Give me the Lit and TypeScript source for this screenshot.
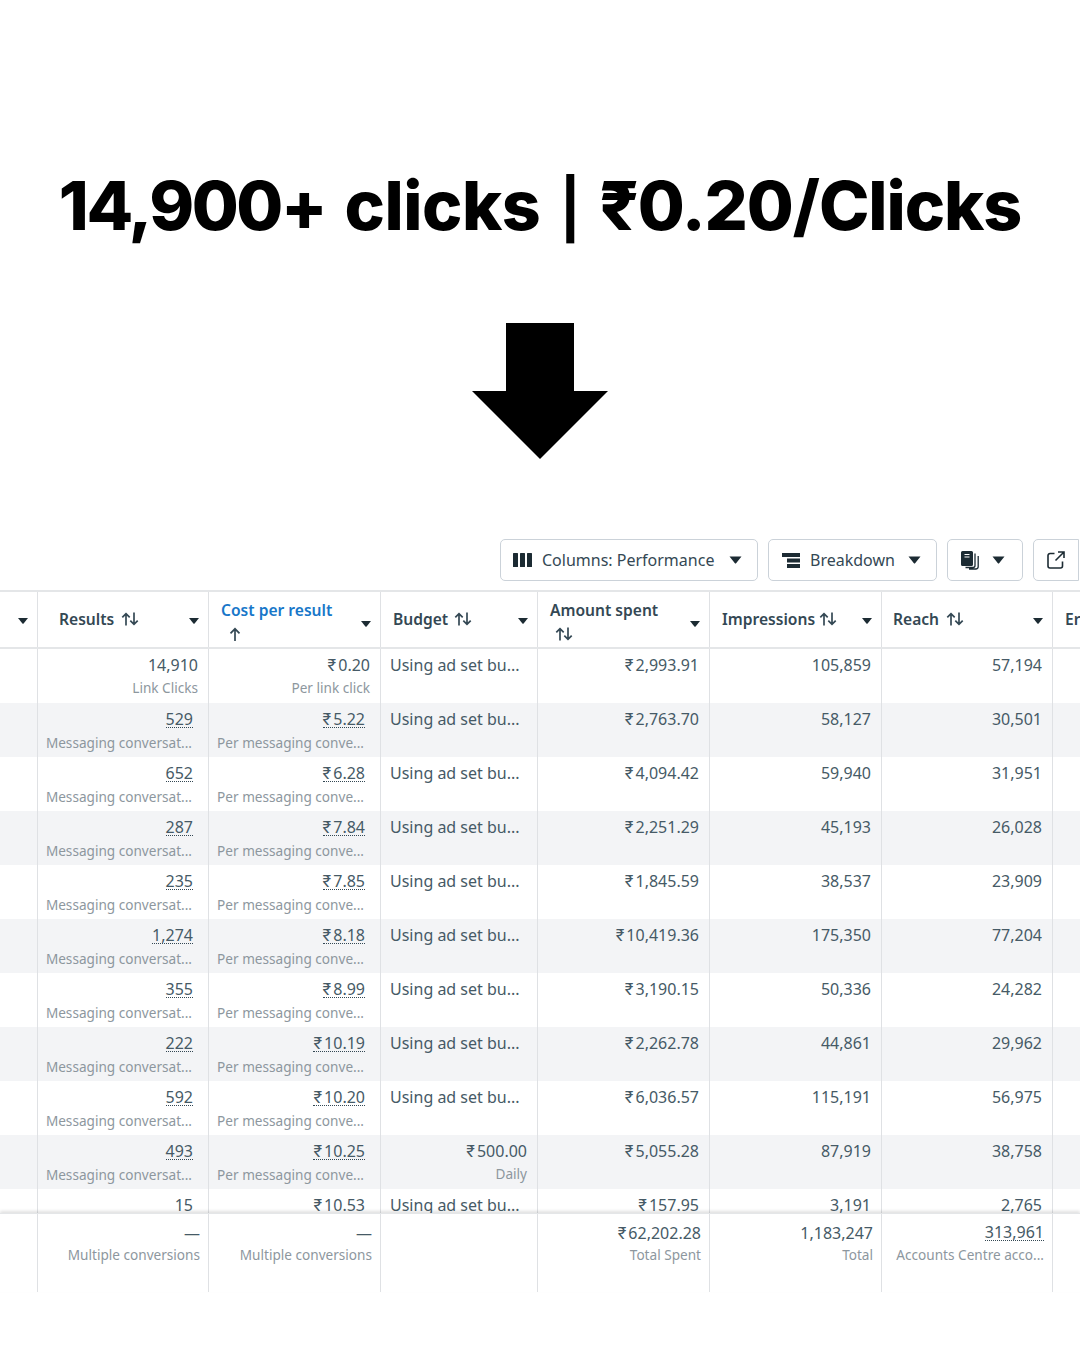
import { LitElement, html, css } from "lit";
import { customElement } from "lit/decorators.js";

type Row = { r: string; c: string; b?: string; a: string; i: string; re: string; first?: boolean };
const rows: Row[] = [
  { r: "14,910", c: "₹0.20", a: "₹2,993.91", i: "105,859", re: "57,194", first: true },
  { r: "529", c: "₹5.22", a: "₹2,763.70", i: "58,127", re: "30,501" },
  { r: "652", c: "₹6.28", a: "₹4,094.42", i: "59,940", re: "31,951" },
  { r: "287", c: "₹7.84", a: "₹2,251.29", i: "45,193", re: "26,028" },
  { r: "235", c: "₹7.85", a: "₹1,845.59", i: "38,537", re: "23,909" },
  { r: "1,274", c: "₹8.18", a: "₹10,419.36", i: "175,350", re: "77,204" },
  { r: "355", c: "₹8.99", a: "₹3,190.15", i: "50,336", re: "24,282" },
  { r: "222", c: "₹10.19", a: "₹2,262.78", i: "44,861", re: "29,962" },
  { r: "592", c: "₹10.20", a: "₹6,036.57", i: "115,191", re: "56,975" },
  { r: "493", c: "₹10.25", b: "₹500.00", a: "₹5,055.28", i: "87,919", re: "38,758" },
];

const money = (s: string) =>
  s.startsWith("₹") ? html`<span class="rs">₹</span>${s.slice(1)}` : s;

const caret = html`<svg class="caret" width="13" height="8" viewBox="0 0 13 8"><path d="M0.500 0.500h12L7.300 7a1 1 0 0 1-1.600 0z" fill="#1c2b33"/></svg>`;
const hcaret = html`<svg class="hcaret" width="10" height="6" viewBox="0 0 10 6"><path d="M0 0h10L5.600 5.500a.8.8 0 0 1-1.200 0z" fill="#1c2b33"/></svg>`;
const sortBoth = html`<svg class="sort" width="18" height="14" viewBox="0 0 18 14" fill="none" stroke="#344854" stroke-width="1.700"><path d="M5 13.500V2M1.300 5.300 5 1.600l3.700 3.700M13 .5V12M9.300 8.700l3.700 3.700 3.700-3.700"/></svg>`;
const sortUp = html`<svg class="sort" width="12" height="14" viewBox="0 0 12 14" fill="none" stroke="#344854" stroke-width="1.700"><path d="M6 14V2M1.500 6.300 6 1.800l4.500 4.500"/></svg>`;

@customElement("app-root")
export class AppRoot extends LitElement {
  static styles = css`
    :host { display: block; width: 1080px; height: 1350px; background: #fff; overflow: hidden;
      font-family: "Noto Sans", "Liberation Sans", sans-serif; color: #344854; }
    .title { padding-top: 170px; height: 70px; margin: 0; text-align: center;
      font-family: "Inter", "Liberation Sans", sans-serif; font-weight: 800; font-size: 68px; line-height: 70px; color: #000; white-space: nowrap; letter-spacing: -1.100px; word-spacing: 5.500px; }
    .title .w1 { letter-spacing: -2.400px; }
    .title .w2 { letter-spacing: -0.500px; }
    .title .pipe { font-size: 58px; font-weight: 700; }
    .arrow { display: block; margin: 83px auto 0; }
    .toolbar { display: flex; height: 42px; margin-top: 80px; padding-left: 500px; gap: 10px; }
    .btn { display: flex; align-items: center; box-sizing: border-box; height: 42px; border: 1.500px solid #cbd2d9; border-radius: 5px;
      font-size: 16px; color: #344854; background: #fff; white-space: nowrap; }
    .b1 { width: 258px; padding-left: 12px; }
    .b2 { width: 169px; padding-left: 13px; }
    .b3 { width: 76px; padding-left: 12px; }
    .b4 { width: 46px; padding-left: 13px; border-radius: 5px 0 0 5px; }
    .btn .label { margin-left: 10px; flex: 1; }
    .btn .caret { margin-right: 15px; }
    .b3 .caret { margin-left: 12px; margin-right: 0; }
    .table { margin-top: 9px; border-top: 2px solid #e4e6e8; }
    .cols { display: grid; grid-template-columns: 38px 171px 172px 157px 172px 172px 171px 27px; }
    .head { height: 55px; border-bottom: 2px solid #e4e6e8; }
    .hc { position: relative; display: flex; align-items: center; box-sizing: border-box; height: 55px; padding: 0 12px 2px 12px;
      border-right: 1px solid #dfe1e4; font-size: 15.600px; font-weight: 600; color: #344854; white-space: nowrap; }
    .hc .sort { margin-left: 6px; }
    .hc.results { padding-left: 21px; }
    .hc.results .sort { margin-left: 7px; }
    .hc.imp .sort { margin-left: 4px; }
    .hc.reach { padding-left: 11px; }
    .hc.reach .sort { margin-left: 7px; }
    .hc.two { flex-direction: column; align-items: flex-start; justify-content: center; line-height: 24px; padding-bottom: 0; }
    .hc.two .sort { margin: 5px 0 0 5px; display: block; }
    .hc.two.active .sort { margin-left: 8px; }
    .hc.active .t { color: #1877c9; }
    .hcaret { position: absolute; right: 9px; top: 26px; }
    .two .hcaret { top: 29px; }
    .hc.last { border-right: none; overflow: hidden; }
    .body { height: 564px; overflow: hidden; }
    .row { height: 54px; }
    .row.alt { background: #f3f4f6; }
    .cell { display: flex; flex-direction: column; align-items: flex-end; box-sizing: border-box; height: 54px; padding: 4px 10px 0 0;
      border-right: 1px solid #dfe1e4; font-size: 16px; line-height: 24px; color: #465a66; white-space: nowrap; }
    .cell.pad { padding-right: 15px; }
    .cell.pad .sub { margin-right: 1px; }
    .cell.txt { align-items: flex-start; padding-left: 9px; }
    .cell.none { border-right: none; }
    .sub { font-size: 13.600px; line-height: 22px; color: #8d979e; }
    .rs { font-family: "Inter", sans-serif; margin-right: 2px; }
    .dot { border-bottom: 1px dotted #344854; line-height: 15px; margin-top: 5px; margin-bottom: 4px; }
    .foot { position: relative; box-shadow: 0 -2px 3px rgba(0,0,0,0.12); border-top: 1px solid #e4e6e8; height: 78px; background: #fff; }
    .foot .cell { height: 78px; padding-top: 7px; padding-right: 8px; }
    .foot .cell.none { padding: 0; }
    .foot .sub { margin-top: -1px; }
    .foot .dot { margin-top: 4px; margin-bottom: 4px; }
  `;

  private row(r: Row, i: number) {
    return html`<div class="cols row ${i % 2 ? "alt" : ""}">
      <div class="cell"></div>
      <div class="cell ${r.first ? "" : "pad"}">
        ${r.first ? html`<div>${r.r}</div>` : html`<div class="dot">${r.r}</div>`}
        <div class="sub">${r.first ? "Link Clicks" : "Messaging conversat..."}</div>
      </div>
      <div class="cell ${r.first ? "" : "pad"}">
        ${r.first ? html`<div>${money(r.c)}</div>` : html`<div class="dot">${money(r.c)}</div>`}
        <div class="sub">${r.first ? "Per link click" : "Per messaging conve..."}</div>
      </div>
      ${r.b
        ? html`<div class="cell"><div>${money(r.b)}</div><div class="sub">Daily</div></div>`
        : html`<div class="cell txt"><div>Using ad set bu...</div></div>`}
      <div class="cell"><div>${money(r.a)}</div></div>
      <div class="cell"><div>${r.i}</div></div>
      <div class="cell"><div>${r.re}</div></div>
      <div class="cell none"></div>
    </div>`;
  }

  render() {
    return html`
      <h1 class="title"><span class="w1">14,900+</span> <span class="w2">clicks</span> <span class="pipe">|</span> ₹0.20/Clicks</h1>
      <svg class="arrow" width="136" height="136" viewBox="0 0 136 136"><polygon points="34,0 102,0 102,68 136,68 68,136 0,68 34,68" fill="#000"/></svg>

      <div class="toolbar">
        <div class="btn b1">
          <svg width="19" height="14" viewBox="0 0 19 14" fill="#1c2b33"><rect width="5" height="14" rx=".5"/><rect x="7" width="5" height="14" rx=".5"/><rect x="14" width="5" height="14" rx=".5"/></svg>
          <span class="label">Columns: Performance</span>${caret}
        </div>
        <div class="btn b2">
          <svg width="18" height="15" viewBox="0 0 18 15" fill="#1c2b33"><rect width="18" height="4"/><rect x="5" y="5.500" width="13" height="4"/><rect x="5" y="11" width="13" height="4"/></svg>
          <span class="label">Breakdown</span>${caret}
        </div>
        <div class="btn b3">
          <svg width="20" height="20" viewBox="0 0 20 20"><path d="M1 2.500A1.500 1.500 0 0 1 2.500 1h9A1.500 1.500 0 0 1 13 2.500v12a1.500 1.500 0 0 1-1.500 1.500h-9A1.500 1.500 0 0 1 1 14.500z" fill="#1c2b33"/><path d="M4.500 4.500h5M4.500 7h5" stroke="#fff" stroke-width="1.200"/><path d="M15 3.500v12a2 2 0 0 1-2 2H5.500M18.200 6v10.500a2.500 2.500 0 0 1-2.500 2.500H9" fill="none" stroke="#1c2b33" stroke-width="1.300"/></svg>
          ${caret}
        </div>
        <div class="btn b4">
          <svg width="18" height="18" viewBox="0 0 18 18" fill="none" stroke="#1c2b33" stroke-width="1.600"><path d="M7.500 2.500H3A2 2 0 0 0 1 4.500v10.500a2 2 0 0 0 2 2h10.500a2 2 0 0 0 2-2V10.500"/><path d="M11 1h6v6M16.500 1.500l-8 8"/></svg>
        </div>
      </div>

      <div class="table">
        <div class="cols head">
          <div class="hc">${hcaret}</div>
          <div class="hc results"><span class="t">Results</span>${sortBoth}${hcaret}</div>
          <div class="hc two active"><span class="t">Cost per result</span>${sortUp}${hcaret}</div>
          <div class="hc"><span class="t">Budget</span>${sortBoth}${hcaret}</div>
          <div class="hc two"><span class="t">Amount spent</span>${sortBoth}${hcaret}</div>
          <div class="hc imp"><span class="t">Impressions</span>${sortBoth}${hcaret}</div>
          <div class="hc reach"><span class="t">Reach</span>${sortBoth}${hcaret}</div>
          <div class="hc last"><span class="t">Er</span></div>
        </div>
        <div class="body">
          ${rows.map((r, i) => this.row(r, i))}
          <div class="cols row">
            <div class="cell"></div>
            <div class="cell pad"><div>15</div></div>
            <div class="cell pad"><div>${money("₹10.53")}</div></div>
            <div class="cell txt"><div>Using ad set bu...</div></div>
            <div class="cell"><div>${money("₹157.95")}</div></div>
            <div class="cell"><div>3,191</div></div>
            <div class="cell"><div>2,765</div></div>
            <div class="cell none"></div>
          </div>
        </div>
        <div class="cols foot">
          <div class="cell"></div>
          <div class="cell"><div>—</div><div class="sub">Multiple conversions</div></div>
          <div class="cell"><div>—</div><div class="sub">Multiple conversions</div></div>
          <div class="cell"></div>
          <div class="cell"><div>${money("₹62,202.28")}</div><div class="sub">Total Spent</div></div>
          <div class="cell"><div>1,183,247</div><div class="sub">Total</div></div>
          <div class="cell"><div class="dot">313,961</div><div class="sub">Accounts Centre acco...</div></div>
          <div class="cell none"></div>
        </div>
      </div>
    `;
  }
}
